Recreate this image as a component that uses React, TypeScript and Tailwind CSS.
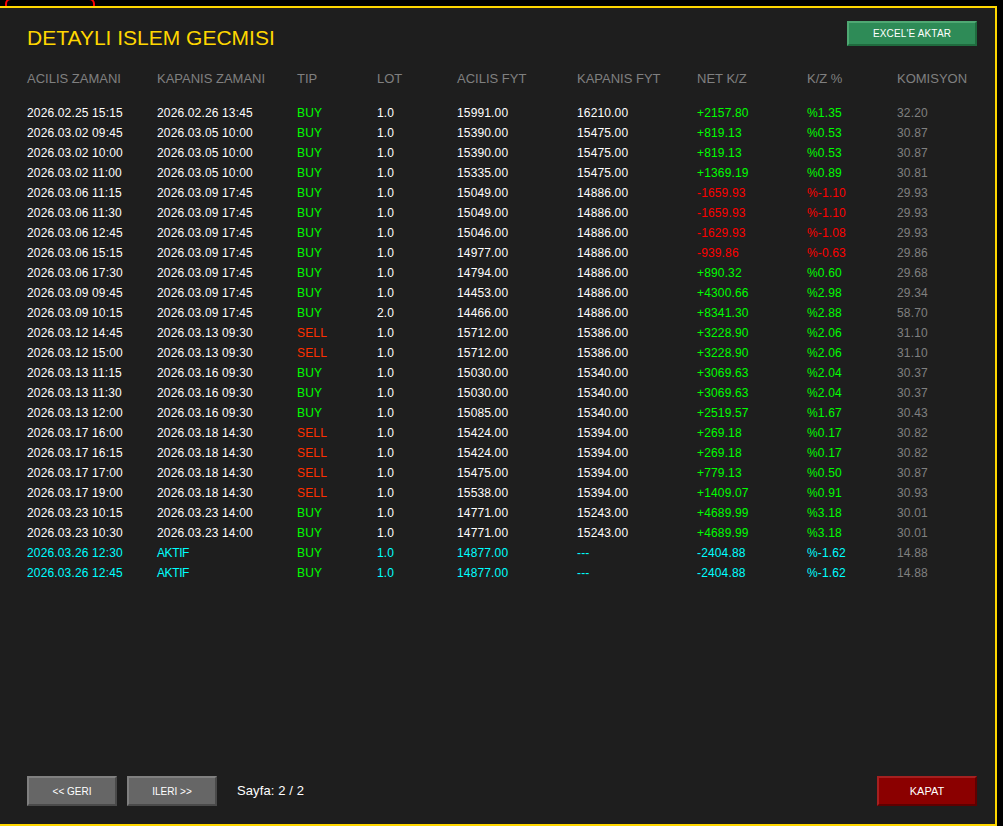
import React from "react";

const columns = [
  { name: "ACILIS ZAMANI", width: "w-[130px]" },
  { name: "KAPANIS ZAMANI", width: "w-[140px]" },
  { name: "TIP", width: "w-[80px]" },
  { name: "LOT", width: "w-[80px]" },
  { name: "ACILIS FYT", width: "w-[120px]" },
  { name: "KAPANIS FYT", width: "w-[120px]" },
  { name: "NET K/Z", width: "w-[110px]" },
  { name: "K/Z %", width: "w-[90px]" },
  { name: "KOMISYON", width: "w-[80px]" },
];

const trades = [
  ["2026.02.25 15:15", "2026.02.26 13:45", "BUY", "1.0", "15991.00", "16210.00", "+2157.80", "%1.35", "32.20"],
  ["2026.03.02 09:45", "2026.03.05 10:00", "BUY", "1.0", "15390.00", "15475.00", "+819.13", "%0.53", "30.87"],
  ["2026.03.02 10:00", "2026.03.05 10:00", "BUY", "1.0", "15390.00", "15475.00", "+819.13", "%0.53", "30.87"],
  ["2026.03.02 11:00", "2026.03.05 10:00", "BUY", "1.0", "15335.00", "15475.00", "+1369.19", "%0.89", "30.81"],
  ["2026.03.06 11:15", "2026.03.09 17:45", "BUY", "1.0", "15049.00", "14886.00", "-1659.93", "%-1.10", "29.93"],
  ["2026.03.06 11:30", "2026.03.09 17:45", "BUY", "1.0", "15049.00", "14886.00", "-1659.93", "%-1.10", "29.93"],
  ["2026.03.06 12:45", "2026.03.09 17:45", "BUY", "1.0", "15046.00", "14886.00", "-1629.93", "%-1.08", "29.93"],
  ["2026.03.06 15:15", "2026.03.09 17:45", "BUY", "1.0", "14977.00", "14886.00", "-939.86", "%-0.63", "29.86"],
  ["2026.03.06 17:30", "2026.03.09 17:45", "BUY", "1.0", "14794.00", "14886.00", "+890.32", "%0.60", "29.68"],
  ["2026.03.09 09:45", "2026.03.09 17:45", "BUY", "1.0", "14453.00", "14886.00", "+4300.66", "%2.98", "29.34"],
  ["2026.03.09 10:15", "2026.03.09 17:45", "BUY", "2.0", "14466.00", "14886.00", "+8341.30", "%2.88", "58.70"],
  ["2026.03.12 14:45", "2026.03.13 09:30", "SELL", "1.0", "15712.00", "15386.00", "+3228.90", "%2.06", "31.10"],
  ["2026.03.12 15:00", "2026.03.13 09:30", "SELL", "1.0", "15712.00", "15386.00", "+3228.90", "%2.06", "31.10"],
  ["2026.03.13 11:15", "2026.03.16 09:30", "BUY", "1.0", "15030.00", "15340.00", "+3069.63", "%2.04", "30.37"],
  ["2026.03.13 11:30", "2026.03.16 09:30", "BUY", "1.0", "15030.00", "15340.00", "+3069.63", "%2.04", "30.37"],
  ["2026.03.13 12:00", "2026.03.16 09:30", "BUY", "1.0", "15085.00", "15340.00", "+2519.57", "%1.67", "30.43"],
  ["2026.03.17 16:00", "2026.03.18 14:30", "SELL", "1.0", "15424.00", "15394.00", "+269.18", "%0.17", "30.82"],
  ["2026.03.17 16:15", "2026.03.18 14:30", "SELL", "1.0", "15424.00", "15394.00", "+269.18", "%0.17", "30.82"],
  ["2026.03.17 17:00", "2026.03.18 14:30", "SELL", "1.0", "15475.00", "15394.00", "+779.13", "%0.50", "30.87"],
  ["2026.03.17 19:00", "2026.03.18 14:30", "SELL", "1.0", "15538.00", "15394.00", "+1409.07", "%0.91", "30.93"],
  ["2026.03.23 10:15", "2026.03.23 14:00", "BUY", "1.0", "14771.00", "15243.00", "+4689.99", "%3.18", "30.01"],
  ["2026.03.23 10:30", "2026.03.23 14:00", "BUY", "1.0", "14771.00", "15243.00", "+4689.99", "%3.18", "30.01"],
  ["2026.03.26 12:30", "AKTIF", "BUY", "1.0", "14877.00", "---", "-2404.88", "%-1.62", "14.88"],
  ["2026.03.26 12:45", "AKTIF", "BUY", "1.0", "14877.00", "---", "-2404.88", "%-1.62", "14.88"],
];

function cellColor(row: string[], i: number) {
  const active = row[1] === "AKTIF";
  if (i === 2) return row[2] === "BUY" ? "text-[#00ff00]" : "text-[#ff3000]";
  if (i === 8) return "text-[#808080]";
  if (active) return "text-[#00ffff]";
  if (i === 6 || i === 7) return row[6].startsWith("-") ? "text-[#ff0000]" : "text-[#00ff00]";
  return "text-white";
}

function Bevel({ label, className }: { label: string; className: string }) {
  return (
    <button className={`flex items-center justify-center border-2 text-white ${className}`}>
      {label}
    </button>
  );
}

export default function App() {
  return (
    <div className="relative h-[826px] w-[1003px] overflow-hidden bg-black pt-[6px] font-['Liberation_Sans',Arial,sans-serif]">
      <div className="absolute left-[5px] top-[-2px] h-[20px] w-[90px] rounded-[6px] border-2 border-[#ff0000]" />
      <div className="relative flex h-[820px] w-[997px] flex-col border-y-2 border-r-2 border-[#ffd700] bg-[#1e1e1e] pl-[27px] pr-[18px]">
        <div className="flex h-[61px] items-start justify-between">
          <h1 className="mt-[18px] text-[21px] leading-[24px] text-[#ffd700]">DETAYLI ISLEM GECMISI</h1>
          <Bevel
            label="EXCEL'E AKTAR"
            className="mt-[13px] h-[25px] w-[130px] border-t-[#4fa873] border-l-[#4fa873] border-r-[#1f6b3e] border-b-[#1f6b3e] bg-[#2e8b57] text-[10px] tracking-[0.15px]"
          />
        </div>

        <div className="flex h-[20px] items-center text-[13px] text-[#808080]">
          {columns.map((c) => (
            <div key={c.name} className={`${c.width} shrink-0`}>{c.name}</div>
          ))}
        </div>

        <div className="mt-[14px] flex-1">
          {trades.map((row, r) => (
            <div key={r} className="flex h-[20px] items-center text-[12px] tracking-[0.15px]">
              {row.map((v, i) => (
                <div key={i} className={`${columns[i].width} shrink-0 ${cellColor(row, i)} ${v === "AKTIF" ? "tracking-[-0.4px]" : ""}`}>{v}</div>
              ))}
            </div>
          ))}
        </div>

        <div className="mb-[18px] flex h-[30px] items-center">
          <Bevel
            label="<< GERI"
            className="h-[30px] w-[90px] border-t-[#808080] border-l-[#808080] border-r-[#4a4a4a] border-b-[#4a4a4a] bg-[#666666] text-[10px]"
          />
          <Bevel
            label="ILERI >>"
            className="ml-[10px] h-[30px] w-[90px] border-t-[#808080] border-l-[#808080] border-r-[#4a4a4a] border-b-[#4a4a4a] bg-[#666666] text-[10px]"
          />
          <span className="ml-[20px] text-[13px] tracking-[0.1px] text-white">Sayfa: 2 / 2</span>
          <Bevel
            label="KAPAT"
            className="ml-auto h-[30px] w-[100px] border-t-[#a52020] border-l-[#a52020] border-r-[#600000] border-b-[#600000] bg-[#8b0000] text-[11px]"
          />
        </div>
      </div>
    </div>
  );
}
